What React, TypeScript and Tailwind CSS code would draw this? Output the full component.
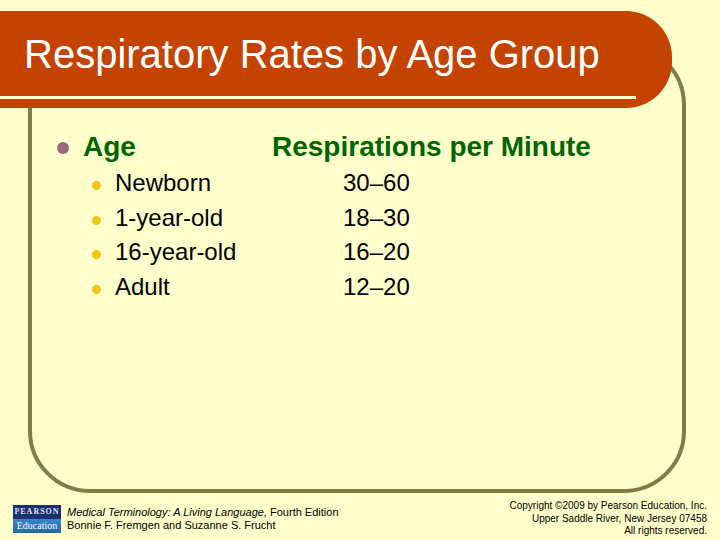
const rates = [
  { age: "Newborn", value: "30–60" },
  { age: "1-year-old", value: "18–30" },
  { age: "16-year-old", value: "16–20" },
  { age: "Adult", value: "12–20" },
];

function PearsonLogo() {
  return (
    <div className="flex flex-col w-[48px] h-[28px] shrink-0">
      <div className="h-[14px] bg-[#1b2f6e] flex items-center justify-center text-[8px] leading-none font-bold tracking-[1px] text-[#dfe6f3] font-['Liberation_Serif',serif]">
        PEARSON
      </div>
      <div className="h-[14px] bg-gradient-to-b from-[#3a86c8] to-[#2467ad] flex items-center justify-center text-[10px] leading-none text-white font-['Liberation_Serif',serif]">
        Education
      </div>
    </div>
  );
}

export default function App() {
  return (
    <div className="w-[720px] h-[540px] bg-[#ffffcc] overflow-hidden flex flex-col font-['Liberation_Sans',Arial,sans-serif]">
      <div className="relative z-10 mt-[11px] h-[97px] w-[672px] shrink-0 rounded-r-[46px] bg-[#c54300] flex flex-col">
        <h1 className="pl-[24px] pt-[23px] text-[40px] leading-[40px] text-white">
          Respiratory Rates by Age Group
        </h1>
        <div className="mt-auto mb-[9px] h-[3px] w-[636px] bg-[#ffffcc]" />
      </div>

      <div className="-mt-[65px] ml-[28px] w-[658px] h-[450px] shrink-0 border-4 border-[#827d45] rounded-[62px] pl-[25px] pt-[84px]">
        <div className="flex items-start">
          <span className="mt-[11px] w-[12px] h-[12px] rounded-full bg-[#9b6b7b] shrink-0" />
          <span className="ml-[14px] w-[189px] text-[28px] leading-[32px] font-bold text-[#006600]">Age</span>
          <span className="text-[28px] leading-[32px] font-bold text-[#006600]">Respirations per Minute</span>
        </div>
        <ul className="mt-[3px] pl-[35px]">
          {rates.map((r) => (
            <li key={r.age} className="flex items-start text-[24px] leading-[34.7px] text-black">
              <span className="mt-[15px] w-[9px] h-[9px] rounded-full bg-[#f5c518] shrink-0" />
              <span className="ml-[14px] w-[228px]">{r.age}</span>
              <span>{r.value}</span>
            </li>
          ))}
        </ul>
      </div>

      <div className="flex items-center justify-between pl-[13px] pr-[13px] mt-[7px]">
        <div className="flex items-center">
          <PearsonLogo />
          <div className="ml-[6px] text-[11px] leading-[12.5px] text-black">
            <div>
              <i>Medical Terminology: A Living Language,</i> Fourth Edition
            </div>
            <div>Bonnie F. Fremgen and Suzanne S. Frucht</div>
          </div>
        </div>
        <div className="text-right text-[10px] leading-[12.5px] text-black">
          <div>Copyright ©2009 by Pearson Education, Inc.</div>
          <div>Upper Saddle River, New Jersey 07458</div>
          <div>All rights reserved.</div>
        </div>
      </div>
    </div>
  );
}
